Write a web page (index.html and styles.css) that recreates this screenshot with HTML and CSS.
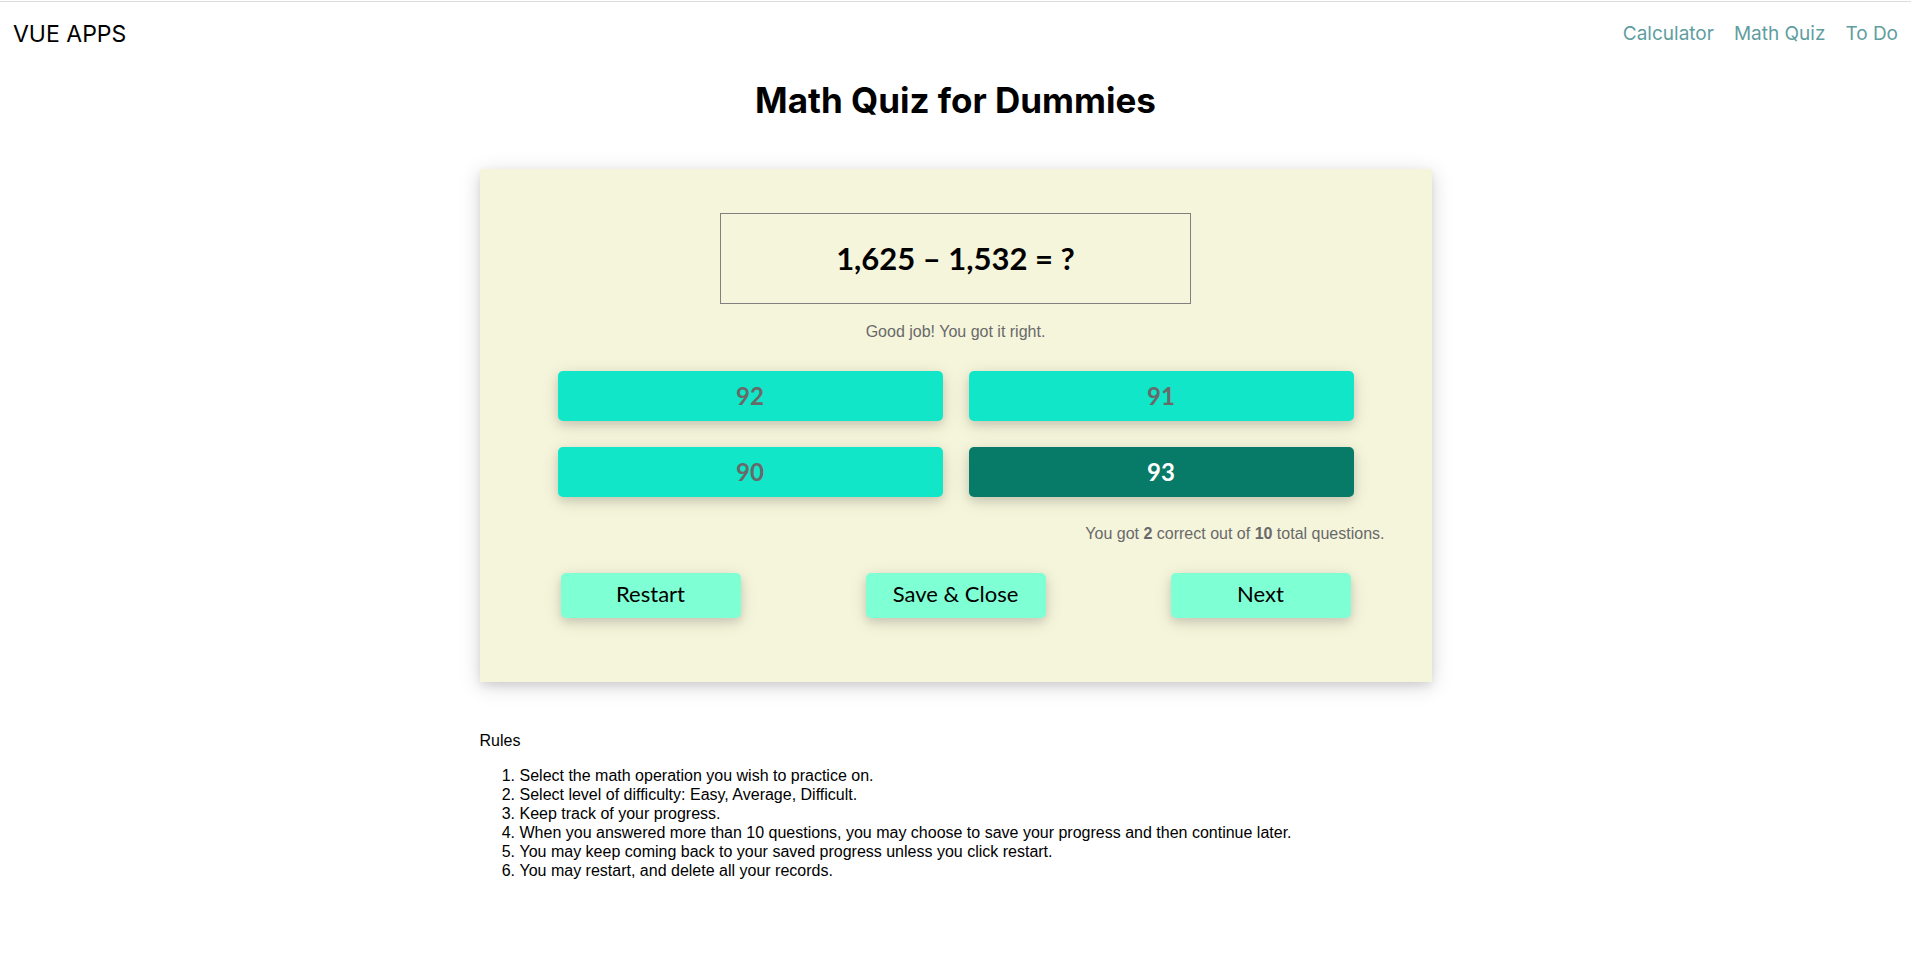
FILE: index.html
```html
<!DOCTYPE html>
<html lang="en">
<head>
<meta charset="utf-8">
<title>Math Quiz for Dummies</title>
<link rel="stylesheet" href="styles.css">
</head>
<body>
<header class="topbar">
  <div class="brand">VUE APPS</div>
  <nav class="nav">
    <a href="#calculator">Calculator</a>
    <a href="#quiz">Math Quiz</a>
    <a href="#todo">To Do</a>
  </nav>
</header>
<main class="page">
  <h1 class="title">Math Quiz for Dummies</h1>
  <section class="card">
    <div class="question">1,625 – 1,532 = ?</div>
    <p class="feedback">Good job! You got it right.</p>
    <div class="answers">
      <button class="answer" type="button">92</button>
      <button class="answer" type="button">91</button>
      <button class="answer" type="button">90</button>
      <button class="answer correct" type="button">93</button>
    </div>
    <p class="score">You got <b>2</b> correct out of <b>10</b> total questions.</p>
    <div class="actions">
      <button class="action" type="button">Restart</button>
      <button class="action" type="button">Save &amp; Close</button>
      <button class="action" type="button">Next</button>
    </div>
  </section>
  <section class="rules">
    <p class="rules-title">Rules</p>
    <ol class="rules-list">
      <li>Select the math operation you wish to practice on.</li>
      <li>Select level of difficulty: Easy, Average, Difficult.</li>
      <li>Keep track of your progress.</li>
      <li>When you answered more than 10 questions, you may choose to save your progress and then continue later.</li>
      <li>You may keep coming back to your saved progress unless you click restart.</li>
      <li>You may restart, and delete all your records.</li>
    </ol>
  </section>
</main>
</body>
</html>
```
FILE: styles.css
```css
* {
  box-sizing: border-box;
}

body {
  margin: 0;
  padding-top: 1px;
  background: #fff;
  color: #000;
  font: 16px/19px "Liberation Sans", sans-serif;
}

.topbar {
  display: flex;
  justify-content: space-between;
  align-items: center;
  height: 64px;
  padding: 0 13px;
  border-top: 1px solid #dcdddd;
  font-family: Inter, sans-serif;
}

.brand {
  font-size: 23px;
  line-height: 28px;
}

.nav {
  display: flex;
  gap: 20px;
}

.nav a {
  color: #5f9ea0;
  font-size: 19px;
  line-height: 28px;
  text-decoration: none;
}

.page {
  width: 50%;
  max-width: 952px;
  min-width: 640px;
  margin: 0 auto;
}

.title {
  margin: 16px 0 49px;
  font: 700 35px/39px Inter, sans-serif;
  text-align: center;
}

.card {
  display: flex;
  flex-direction: column;
  padding: 44px 47px 64px;
  background: #f5f5dc;
  box-shadow: 0 4px 8px 0 rgba(0, 0, 0, 0.08), 0 4px 20px 0 rgba(0, 0, 0, 0.16);
}

.question {
  align-self: center;
  width: 55%;
  padding: 24px 0;
  border: 1px solid #808080;
  font: 700 31px/41px Lato, sans-serif;
  text-align: center;
}

.feedback {
  margin: 18px 0 30px;
  color: #696969;
  text-align: center;
}

.answers {
  display: grid;
  grid-template-columns: 1fr 1fr;
  gap: 26px;
  padding: 0 31px;
}

.answer,
.action {
  border: 0;
  border-radius: 5px;
  box-shadow: 0 4px 8px 0 rgba(0, 0, 0, 0.1), 0 4px 18px 0 rgba(0, 0, 0, 0.12);
}

.answer {
  height: 50px;
  background: #11e6c8;
  color: #696969;
  font: 700 24px/30px Lato, sans-serif;
}

.answer.correct {
  background: #087a68;
  color: #fff;
}

.score {
  margin: 27px 0 30px;
  color: #696969;
  text-align: right;
}

.actions {
  display: flex;
  justify-content: space-between;
  padding: 0 34px;
}

.action {
  width: 180px;
  height: 45px;
  padding: 0 0 4px;
  background: #7fffd4;
  color: #000;
  font: 22px/28px Lato, sans-serif;
}

.rules {
  padding-top: 49px;
}

.rules-title {
  margin: 0 0 16px;
}

.rules-list {
  margin: 0;
  padding-left: 40px;
}
```
